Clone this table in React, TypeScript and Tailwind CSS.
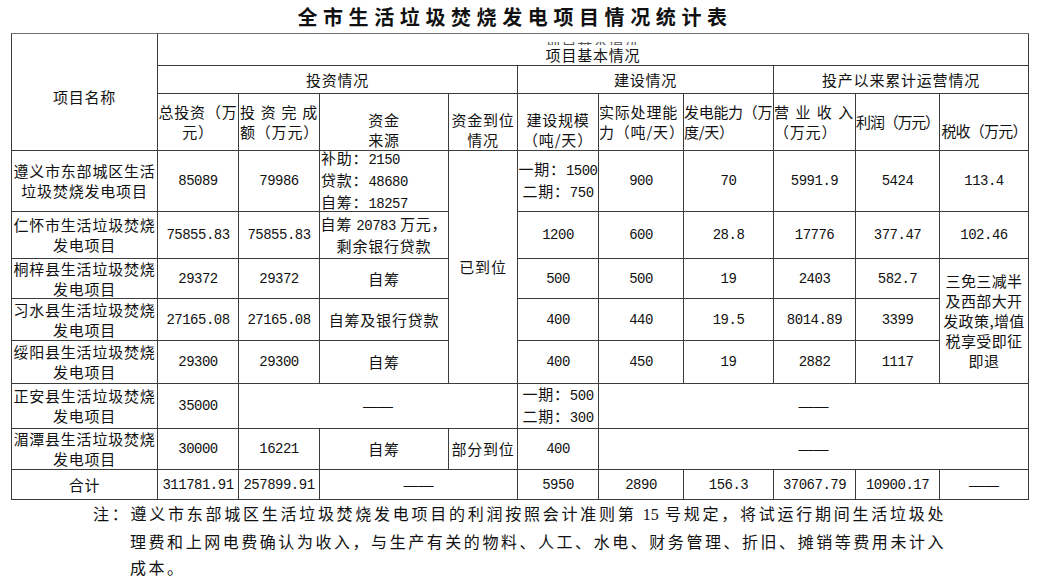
import React from "react";

const line = "border-r border-b border-[#3c3c3c]";

type Kids = { children?: React.ReactNode; className?: string };

const Cell = ({ className = "justify-center items-center text-center", children }: Kids) => (
  <div className={`${line} flex flex-col whitespace-nowrap overflow-visible ${className}`}>{children}</div>
);

// SimSun-like half width digits
const N = ({ children }: Kids) => (
  <span className="font-['Liberation_Mono',monospace] text-[14px] tracking-[-0.5px]">{children}</span>
);

const Num = ({ v }: { v: string }) => (
  <Cell>
    <N>{v}</N>
  </Cell>
);

const Name = ({ a, b }: { a: string; b: string }) => (
  <Cell>
    <span>{a}</span>
    <span>{b}</span>
  </Cell>
);

const Dash = ({ className = "" }: { className?: string }) => (
  <Cell className={`justify-center items-center ${className}`}>
    <span className="font-['Liberation_Sans',sans-serif] tracking-normal">——</span>
  </Cell>
);

const Spread = ({ chars }: { chars: string[] }) => (
  <span className="flex w-full justify-between pr-[1px]">
    {chars.map((c) => (
      <span key={c}>{c}</span>
    ))}
  </span>
);

export default function App() {
  return (
    <div className="w-[1041px] h-[584px] overflow-hidden bg-white text-[#111] font-['Noto_Sans_CJK_SC',sans-serif]">
      {/* title */}
      <div className="ml-[11px] w-[1018px] h-[33px] flex items-center justify-center pr-[10px]">
        <h1 className="text-[20px] font-bold tracking-[5.6px] leading-none">全市生活垃圾焚烧发电项目情况统计表</h1>
      </div>

      {/* table */}
      <div className="ml-[11px] w-[1018px] border-l border-t border-l-[#3c3c3c] border-t-[#707070] grid grid-cols-[146px_81px_81px_129px_69px_81px_85px_90px_82px_84px_89px] grid-rows-[32px_28px_57px_61px_47px_40px_42px_43px_45px_41px_30px] text-[15px] tracking-[0.8px] leading-[20px]">
        {/* header */}
        <Cell className="row-span-3 justify-center items-center pt-[9px]">
          <span>项目名称</span>
        </Cell>
        <Cell className="col-span-10 justify-end items-center">
          <div className="h-[3px] overflow-hidden text-[#555]">
            <div className="-mt-[10px]">项目基本情况</div>
          </div>
          <span>项目基本情况</span>
        </Cell>

        <Cell className="col-span-4 justify-center items-center">
          <span>投资情况</span>
        </Cell>
        <Cell className="col-span-3 justify-center items-center">
          <span>建设情况</span>
        </Cell>
        <Cell className="col-span-3 justify-center items-center">
          <span>投产以来累计运营情况</span>
        </Cell>

        <Cell className="justify-center items-center">
          <span>总投资（万</span>
          <span>元）</span>
        </Cell>
        <Cell className="justify-center items-start pl-[1px]">
          <Spread chars={["投", "资", "完", "成"]} />
          <span>额（万元）</span>
        </Cell>
        <Cell className="justify-end items-center">
          <span>资金</span>
          <span>来源</span>
        </Cell>
        <Cell className="justify-end items-center">
          <span>资金到位</span>
          <span>情况</span>
        </Cell>
        <Cell className="justify-end items-center">
          <span>建设规模</span>
          <span>（吨/天）</span>
        </Cell>
        <Cell className="justify-center items-start">
          <span>实际处理能</span>
          <span>力（吨/天）</span>
        </Cell>
        <Cell className="justify-center items-start tracking-[-0.3px]">
          <span>发电能力（万</span>
          <span>度/天）</span>
        </Cell>
        <Cell className="justify-center items-start">
          <Spread chars={["营", "业", "收", "入"]} />
          <span>（万元）</span>
        </Cell>
        <Cell className="justify-center items-center tracking-[-1.2px]">
          <span>利润（万元）</span>
        </Cell>
        <Cell className="justify-center items-center pt-[17px] tracking-[-0.8px]">
          <span>税收（万元）</span>
        </Cell>

        {/* row 1 */}
        <Name a="遵义市东部城区生活" b="垃圾焚烧发电项目" />
        <Num v="85089" />
        <Num v="79986" />
        <Cell className="justify-center items-start pl-[1px]">
          <span>
            补助：<N>2150</N>
          </span>
          <span>
            贷款：<N>48680</N>
          </span>
          <span>
            自筹：<N>18257</N>
          </span>
        </Cell>
        <Cell className="row-span-5 justify-center items-center">
          <span>已到位</span>
        </Cell>
        <Cell className="justify-center items-center">
          <span>
            一期：<N>1500</N>
          </span>
          <span>
            二期：<N>750</N>
          </span>
        </Cell>
        <Num v="900" />
        <Num v="70" />
        <Num v="5991.9" />
        <Num v="5424" />
        <Num v="113.4" />

        {/* row 2 */}
        <Name a="仁怀市生活垃圾焚烧" b="发电项目" />
        <Num v="75855.83" />
        <Num v="75855.83" />
        <Cell className="justify-center items-center">
          <span>
            自筹 <N>20783</N> 万元，
          </span>
          <span>剩余银行贷款</span>
        </Cell>
        <Num v="1200" />
        <Num v="600" />
        <Num v="28.8" />
        <Num v="17776" />
        <Num v="377.47" />
        <Num v="102.46" />

        {/* row 3 */}
        <Name a="桐梓县生活垃圾焚烧" b="发电项目" />
        <Num v="29372" />
        <Num v="29372" />
        <Cell>
          <span>自筹</span>
        </Cell>
        <Num v="500" />
        <Num v="500" />
        <Num v="19" />
        <Num v="2403" />
        <Num v="582.7" />
        <Cell className="row-span-3 justify-center items-center tracking-[0.4px]">
          <span>三免三减半</span>
          <span>及西部大开</span>
          <span>发政策,增值</span>
          <span>税享受即征</span>
          <span>即退</span>
        </Cell>

        {/* row 4 */}
        <Name a="习水县生活垃圾焚烧" b="发电项目" />
        <Num v="27165.08" />
        <Num v="27165.08" />
        <Cell>
          <span>自筹及银行贷款</span>
        </Cell>
        <Num v="400" />
        <Num v="440" />
        <Num v="19.5" />
        <Num v="8014.89" />
        <Num v="3399" />

        {/* row 5 */}
        <Name a="绥阳县生活垃圾焚烧" b="发电项目" />
        <Num v="29300" />
        <Num v="29300" />
        <Cell>
          <span>自筹</span>
        </Cell>
        <Num v="400" />
        <Num v="450" />
        <Num v="19" />
        <Num v="2882" />
        <Num v="1117" />

        {/* row 6 */}
        <Name a="正安县生活垃圾焚烧" b="发电项目" />
        <Num v="35000" />
        <Dash className="col-span-3" />
        <Cell className="justify-center items-center">
          <span>
            一期：<N>500</N>
          </span>
          <span>
            二期：<N>300</N>
          </span>
        </Cell>
        <Dash className="col-span-5" />

        {/* row 7 */}
        <Name a="湄潭县生活垃圾焚烧" b="发电项目" />
        <Num v="30000" />
        <Num v="16221" />
        <Cell>
          <span>自筹</span>
        </Cell>
        <Cell>
          <span>部分到位</span>
        </Cell>
        <Num v="400" />
        <Dash className="col-span-5" />

        {/* total */}
        <Cell>
          <span>合计</span>
        </Cell>
        <Num v="311781.91" />
        <Num v="257899.91" />
        <Dash className="col-span-2" />
        <Num v="5950" />
        <Num v="2890" />
        <Num v="156.3" />
        <Num v="37067.79" />
        <Num v="10900.17" />
        <Dash />
      </div>

      {/* note */}
      <div className="pl-[93px] text-[16px] tracking-[2.5px] leading-[26px]">
        <div className="w-[853px] text-justify [text-align-last:justify] whitespace-nowrap">
          注：遵义市东部城区生活垃圾焚烧发电项目的利润按照会计准则第 <span className="font-['Liberation_Serif',serif] tracking-normal">15</span> 号规定，将试运行期间生活垃圾处
        </div>
        <div className="w-[853px] pl-[37px] text-justify [text-align-last:justify]">
          理费和上网电费确认为收入，与生产有关的物料、人工、水电、财务管理、折旧、摊销等费用未计入
        </div>
        <div className="pl-[37px]">成本。</div>
      </div>
    </div>
  );
}
